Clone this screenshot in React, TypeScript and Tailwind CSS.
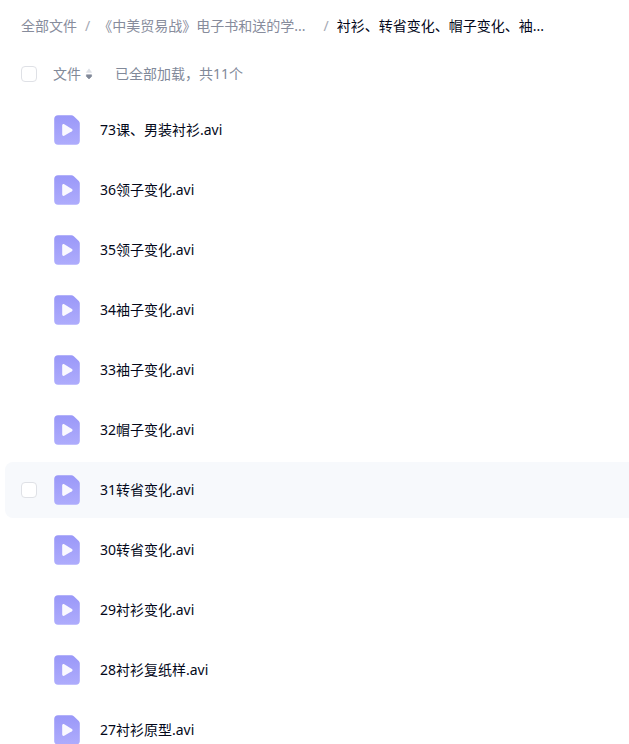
import React, { useState } from "react";

type FileItem = {
  id: number;
  name: string;
};

const files: FileItem[] = [
  { id: 73, name: "73课、男装衬衫.avi" },
  { id: 36, name: "36领子变化.avi" },
  { id: 35, name: "35领子变化.avi" },
  { id: 34, name: "34袖子变化.avi" },
  { id: 33, name: "33袖子变化.avi" },
  { id: 32, name: "32帽子变化.avi" },
  { id: 31, name: "31转省变化.avi" },
  { id: 30, name: "30转省变化.avi" },
  { id: 29, name: "29衬衫变化.avi" },
  { id: 28, name: "28衬衫复纸样.avi" },
  { id: 27, name: "27衬衫原型.avi" },
];

function VideoIcon() {
  return (
    <svg viewBox="0 0 26 30" className="h-[30px] w-[26px] shrink-0" aria-hidden="true">
      <defs>
        <linearGradient id="video-fill" x1="0" y1="0" x2="0" y2="1">
          <stop offset="0" stopColor="#9a98f8" />
          <stop offset="1" stopColor="#aeacfc" />
        </linearGradient>
      </defs>
      <path
        d="M4 0.3H17.3C18.3 0.3 19.1 0.6 19.8 1.3L24.8 6.1C25.5 6.8 25.8 7.6 25.8 8.6V26C25.8 28.2 24.2 29.7 22 29.7H4C1.8 29.7 0.2 28.2 0.2 26V4C0.2 1.8 1.8 0.3 4 0.3Z"
        fill="url(#video-fill)"
      />
      <path
        d="M8.2 10.4C8.2 9.3 9.3 8.7 10.2 9.2L17.9 13.9C18.8 14.5 18.8 15.6 17.9 16.2L10.2 20.8C9.3 21.3 8.2 20.7 8.2 19.6Z"
        fill="#f9f8ff"
      />
    </svg>
  );
}

function SortIcon() {
  return (
    <svg viewBox="0 0 8 12" className="h-3 w-2" aria-hidden="true">
      <path d="M4 0.8L6.6 4.4H1.4Z" fill="#dcdfe5" stroke="#dcdfe5" strokeWidth="0.6" strokeLinejoin="round" />
      <path d="M1.4 6.8H6.6V8.4L4 11L1.4 8.4Z" fill="#818999" stroke="#818999" strokeWidth="0.6" strokeLinejoin="round" />
    </svg>
  );
}

function Checkbox(props: {
  label: string;
  checked: boolean;
  onChange: () => void;
  className?: string;
}) {
  return (
    <input
      type="checkbox"
      aria-label={props.label}
      checked={props.checked}
      onChange={props.onChange}
      className={`size-4 shrink-0 appearance-none rounded border border-[#dfe1e6] bg-white checked:border-[#06a7ff] checked:bg-[#06a7ff] ${props.className ?? ""}`}
    />
  );
}

function App() {
  const [selected, setSelected] = useState<number[]>([]);
  const [active, setActive] = useState(31);
  const [descending, setDescending] = useState(true);

  const rows = descending ? files : [...files].reverse();
  const allSelected = selected.length === files.length;

  const toggle = (id: number) => {
    setSelected((prev) =>
      prev.includes(id) ? prev.filter((item) => item !== id) : [...prev, id]
    );
  };

  return (
    <main className="flex h-screen flex-col bg-white pl-[5px] font-['Noto_Sans','Noto_Sans_CJK_SC',sans-serif] text-sm text-[#03081a]">
      <nav aria-label="路径" className="flex h-[52px] shrink-0 items-center gap-2 pl-4 whitespace-nowrap text-[#878c9c]">
        <a href="#all">全部文件</a>
        <span className="text-[#a5a9b4]">/</span>
        <a href="#parent" className="pr-2.5">
          《中美贸易战》电子书和送的学...
        </a>
        <span className="text-[#a5a9b4]">/</span>
        <a href="#current" aria-current="page" className="text-[#03081a]">
          衬衫、转省变化、帽子变化、袖...
        </a>
      </nav>

      <div className="flex h-11 shrink-0 items-center pl-4 text-[#818999]">
        <Checkbox
          label="全选"
          checked={allSelected}
          onChange={() => setSelected(allSelected ? [] : files.map((file) => file.id))}
        />
        <button
          type="button"
          className="ml-4 flex items-center gap-1"
          onClick={() => setDescending(!descending)}
        >
          文件
          <SortIcon />
        </button>
        <span className="ml-[22px]">已全部加载，共11个</span>
      </div>

      <ul className="flex min-h-0 flex-1 flex-col gap-1 overflow-y-auto pt-1.5 [scrollbar-width:none]">
        {rows.map((file) => (
          <li
            key={file.id}
            onMouseEnter={() => setActive(file.id)}
            className={`flex h-14 shrink-0 items-center rounded-l-lg pl-4 ${
              active === file.id ? "bg-[#f7f9fc]" : ""
            }`}
          >
            <Checkbox
              label={file.name}
              checked={selected.includes(file.id)}
              onChange={() => toggle(file.id)}
              className={active === file.id || selected.includes(file.id) ? "" : "opacity-0"}
            />
            <div className="ml-[17px] flex items-center gap-5">
              <VideoIcon />
              <span>{file.name}</span>
            </div>
          </li>
        ))}
      </ul>
    </main>
  );
}

export default App;
